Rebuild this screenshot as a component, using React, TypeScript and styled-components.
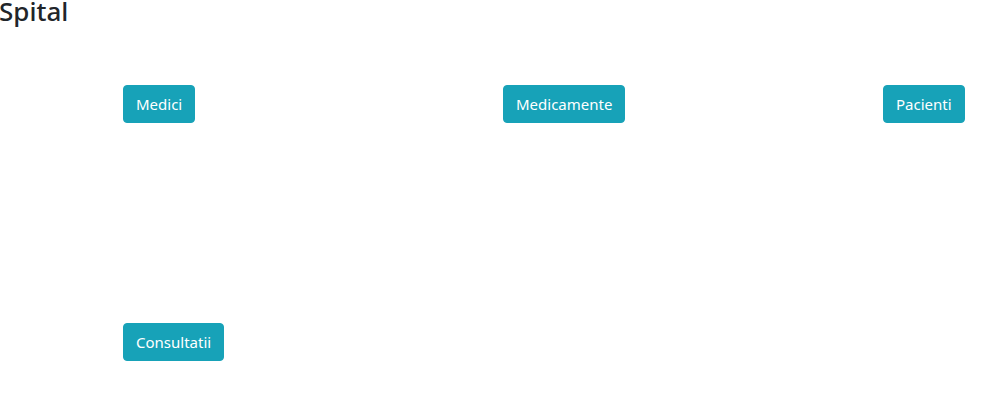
import React from 'react';
import styled, { createGlobalStyle } from 'styled-components';

const GlobalStyle = createGlobalStyle`
  html, body {
    margin: 0;
    padding: 0;
    background: #ffffff;
    color: #212529;
    font-family: "Noto Sans", "Open Sans", sans-serif;
  }
`;

const Page = styled.div`
  width: 989px;
  height: 411px;
  overflow: hidden;
`;

const Title = styled.h3`
  margin: -2px 0 0 -1px;
  font-size: 26px;
  font-weight: 500;
  line-height: 26px;
  color: #212529;
`;

const Grid = styled.div`
  display: grid;
  grid-template-columns: repeat(3, 380px);
  grid-auto-rows: 238px;
  padding: 61px 0 0 123px;
`;

const Cell = styled.div`
  display: flex;
  align-items: flex-start;
`;

const Button = styled.button`
  box-sizing: border-box;
  height: 38px;
  padding: 6px 12px;
  border: 1px solid #17a2b8;
  border-radius: 4px;
  background: #17a2b8;
  color: #ffffff;
  font-family: "Noto Sans", "Open Sans", sans-serif;
  font-size: 15px;
  line-height: 24px;
  cursor: pointer;
`;

const items = ['Medici', 'Medicamente', 'Pacienti', 'Consultatii'];

export default function App() {
  return (
    <Page>
      <GlobalStyle />
      <Title>Spital</Title>
      <Grid>
        {items.map((label) => (
          <Cell key={label}>
            <Button type="button">{label}</Button>
          </Cell>
        ))}
      </Grid>
    </Page>
  );
}
